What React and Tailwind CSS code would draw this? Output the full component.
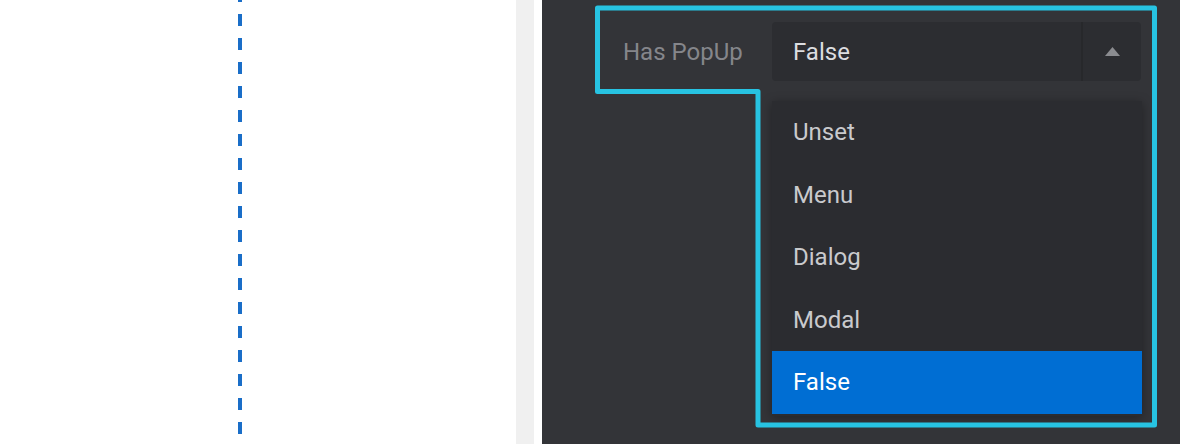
import React from 'react';

export default function App() {
  const options = ['Unset', 'Menu', 'Dialog', 'Modal', 'False'];
  const selected = 'False';

  return (
    <div className="flex h-[444px] w-[1180px] overflow-hidden font-['Roboto','Liberation_Sans',sans-serif]">
      {/* Canvas side */}
      <div className="w-[516px] bg-white">
        <svg width="8" height="444" className="ml-[236px] block">
          <line x1="4" y1="-10" x2="4" y2="434" stroke="#1a6ec8" strokeWidth="4" strokeDasharray="12 12" />
        </svg>
      </div>
      <div className="w-[18px] bg-[#f0f0f0]" />
      <div className="w-[8px] bg-white" />

      {/* Inspector panel */}
      <div className="relative flex-1 bg-[#333438] pl-[81px] pt-[22px]">
        <div className="flex items-center">
          <span className="w-[149px] text-[24px] text-[#85868b]">Has PopUp</span>

          <div className="relative">
            <div className="flex h-[59px] w-[369px] rounded-[4px] bg-[#2c2d31]">
              <div className="flex flex-1 items-center pl-[21px] text-[24px] text-[#dcdde0]">{selected}</div>
              <div className="w-[2px] bg-[#27282b]" />
              <div className="flex w-[58px] items-center justify-center">
                <svg width="15" height="9" viewBox="0 0 15 9">
                  <path d="M7.5 0 L15 9 H0 Z" fill="#8b8c90" />
                </svg>
              </div>
            </div>

            {/* Dropdown menu */}
            <ul className="absolute left-0 top-[79px] w-[370px] bg-[#2b2c30] pb-[2px] shadow-[0_2px_10px_rgba(0,0,0,0.35)]">
              {options.map((opt) => (
                <li
                  key={opt}
                  className={
                    opt === selected
                      ? 'flex h-[62.5px] items-center bg-[#006ed3] pl-[21px] text-[24px] text-white'
                      : 'flex h-[62.5px] items-center pl-[21px] text-[24px] text-[#c9cacd]'
                  }
                >
                  {opt}
                </li>
              ))}
            </ul>
          </div>
        </div>

        {/* Focus outline */}
        <svg className="pointer-events-none absolute left-0 top-0" width="638" height="444">
          <path
            d="M55.5 8 H612.5 V425 H216 V91.5 H55.5 Z"
            fill="none"
            stroke="#27c3e2"
            strokeWidth="5"
            strokeLinejoin="round"
          />
        </svg>
      </div>
    </div>
  );
}
